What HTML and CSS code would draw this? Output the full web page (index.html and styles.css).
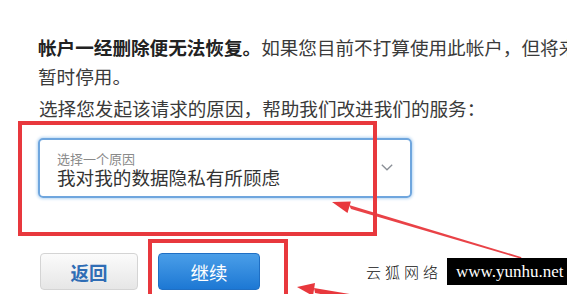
FILE: index.html
```html
<!DOCTYPE html>
<html lang="zh">
<head>
<meta charset="utf-8">
<link rel="stylesheet" href="styles.css">
</head>
<body>
<div class="page">
  <p class="intro"><strong class="strong">帐户一经删除便无法恢复。</strong>如果您目前不打算使用此帐户，但将来可能<br>暂时停用。</p>
  <p class="prompt">选择您发起该请求的原因，帮助我们改进我们的服务：</p>
  <div class="select">
    <div class="select-text">
      <span class="select-label">选择一个原因</span>
      <span class="select-value">我对我的数据隐私有所顾虑</span>
    </div>
    <svg class="chevron" width="12" height="7" viewBox="0 0 12 7"><path d="M0.8 0.8 L6 5.8 L11.2 0.8" fill="none" stroke="#8a8f96" stroke-width="1.3"/></svg>
  </div>
  <div class="actions">
    <button class="btn btn-back">返回</button>
    <button class="btn btn-continue">继续</button>
  </div>

  <div class="mark mark-select"></div>
  <div class="mark mark-button"></div>
  <svg class="arrows" width="567" height="294" viewBox="0 0 567 294">
    <polygon points="349,205 351,209 522,259 521,257" fill="#e8383d" opacity="0.95"/>
    <polygon points="332,202 347.5,213 350.9,201.4" fill="#e8383d"/>
    <polygon points="314,288 315,293 420,312 421,306" fill="#e8383d"/>
    <polygon points="297,287 313,296 315,283" fill="#e8383d"/>
  </svg>
  <div class="watermark">
    <span class="wm-cn">云狐网络</span>
    <span class="wm-url">www.yunhu.net</span>
  </div>
</div>
</body>
</html>
```
FILE: styles.css
```css
html, body {
  margin: 0;
  padding: 0;
  background: #fff;
}
.page {
  position: relative;
  width: 567px;
  height: 294px;
  overflow: hidden;
  padding: 32px 0 0 38px;
  box-sizing: border-box;
  font-family: "Noto Sans CJK SC", "Liberation Sans", sans-serif;
  color: #3a3a3a;
}
.intro {
  margin: 0;
  width: 640px;
  font-size: 18.6px;
  line-height: 29px;
  white-space: nowrap;
}
.strong {
  font-weight: 700;
  color: #222;
}
.prompt {
  margin: 5px 0 0 1px;
  font-size: 18.6px;
  line-height: 26px;
  white-space: nowrap;
}
.select {
  margin: 17px 0 0 0;
  width: 374px;
  height: 60px;
  box-sizing: border-box;
  border: 2px solid #6fa6de;
  border-radius: 5px;
  box-shadow: 0 0 3px 1px #b9d7f3;
  display: flex;
  align-items: center;
  justify-content: space-between;
  padding: 0 17px 0 17px;
}
.select-text {
  display: flex;
  flex-direction: column;
  padding-top: 2px;
}
.select-label {
  font-size: 13px;
  line-height: 15px;
  color: #8a8a8a;
}
.select-value {
  font-size: 18.6px;
  line-height: 22px;
  color: #333;
}
.chevron {
  margin-top: -2px;
}
.actions {
  display: flex;
  gap: 20px;
  margin: 55px 0 0 2px;
}
.btn {
  height: 37px;
  border-radius: 4px;
  font-family: "Noto Sans CJK SC", sans-serif;
  font-size: 18.5px;
  padding: 0;
}
.btn-back {
  width: 98px;
  border: 1px solid #d4d4d4;
  background: linear-gradient(#fbfbfb, #e6e6e6);
  color: #2f6db5;
  font-weight: 700;
}
.btn-continue {
  width: 102px;
  border: 1px solid #1f6fc4;
  background: linear-gradient(#4a9ee8, #1d78d4);
  color: #fff;
}
.mark {
  position: absolute;
  border: 4px solid #e8383d;
  box-sizing: border-box;
}
.mark-select {
  left: 18px;
  top: 121px;
  width: 359px;
  height: 115px;
}
.mark-button {
  left: 148px;
  top: 239px;
  width: 140px;
  height: 70px;
}
.arrows {
  position: absolute;
  left: 0;
  top: 0;
}
.watermark {
  position: absolute;
  left: 366px;
  top: 258px;
  display: flex;
  align-items: center;
  gap: 5px;
  white-space: nowrap;
}
.wm-cn {
  font-family: "Noto Sans CJK SC", serif;
  font-size: 15px;
  line-height: 27px;
  letter-spacing: 4px;
  color: #111;
  font-weight: 300;
}
.wm-url {
  background: #000;
  color: #fff;
  font-family: "Liberation Serif", serif;
  font-size: 17px;
  line-height: 27px;
  padding: 0 0 0 9px;
  width: 121px;
  box-sizing: border-box;
}
```
